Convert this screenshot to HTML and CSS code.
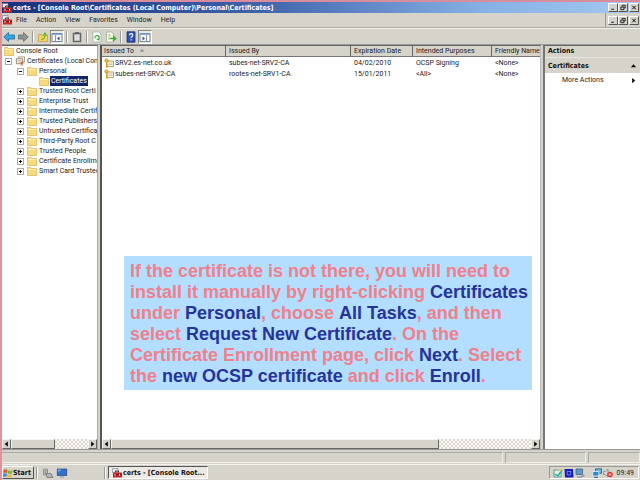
FILE: index.html
```html
<!DOCTYPE html>
<html lang="en">
<head>
    <meta charset="UTF-8">
    <meta name="viewport" content="width=device-width, initial-scale=1.0">
    <title>certs - [Console Root]</title>
    <link rel="stylesheet" href="styles.css">
</head>
<body>
    <!-- shared icons -->
    <svg class="defs" width="0" height="0">
        <symbol id="folder" viewBox="0 0 10 10">
            <path d="M.5 1.500h3l1 1h5v7h-9z" fill="#f6da7c" stroke="#d9b352" stroke-width=".7"/>
            <path d="M1 3.500h8" stroke="#fff3b8"/>
        </symbol>
        <symbol id="toolbox" viewBox="0 0 10 10">
            <path d="M.5.5h5.500v4H.5z" fill="#e8e8ee" stroke="#777b88" stroke-width=".6"/>
            <path d="M3.500 4.500V3h3v1.500" fill="none" stroke="#5b2424"/>
            <rect x="1" y="4.500" width="9" height="5" fill="#c7282c"/>
            <path d="M1 6.500h9" stroke="#751315"/>
            <path d="M3 6v1.500M7.500 6v1.500" stroke="#fff"/>
        </symbol>
        <symbol id="cert" viewBox="0 0 10 10">
            <path d="M3 3h6.500v5.500H3z" fill="#fdf8df" stroke="#a08c55" stroke-width=".8"/>
            <path d="M4.500 5h4M4.500 6.500h4" stroke="#9aa0b8" stroke-width=".6"/>
            <circle cx="2.500" cy="2.500" r="1.700" fill="#f4c33c" stroke="#a87514" stroke-width=".6"/>
            <path d="M2.500 4v5.500M2.500 7h1.300M2.500 9h1.300" stroke="#d99a1c"/>
        </symbol>
        <symbol id="certs" viewBox="0 0 11 10">
            <path d="M3.500.5h7v5.500h-7z" fill="#fff" stroke="#8c7b55" stroke-width=".8"/>
            <path d="M1.500 2.500h7V8h-7z" fill="#fdf8df" stroke="#6c6450" stroke-width=".8"/>
            <path d="M3 4.500h4M3 6h3" stroke="#7d88b0" stroke-width=".6"/>
            <circle cx="7.500" cy="7" r="1.500" fill="#e2662a"/>
            <path d="M7 8l-.5 2M8 8l.5 2" stroke="#c04a20" stroke-width=".7"/>
        </symbol>
        <symbol id="min" viewBox="0 0 8 8"><path d="M2 6h3" stroke="#000"/></symbol>
        <symbol id="restore" viewBox="0 0 8 8"><path d="M3 3V1.500h3.500v3H5M1.500 3.500h3.500v3H1.500z" fill="none" stroke="#000" stroke-width=".9"/></symbol>
        <symbol id="close" viewBox="0 0 8 8"><path d="M2 2l4 4M6 2L2 6" stroke="#000" stroke-width="1.100"/></symbol>
        <symbol id="left" viewBox="0 0 8 8"><path d="M5.500 1v6L2 4z"/></symbol>
        <symbol id="right" viewBox="0 0 8 8"><path d="M2.500 1v6L6 4z"/></symbol>
        <symbol id="up" viewBox="0 0 8 8"><path d="M1 6h6L4 2.500z"/></symbol>
        <symbol id="pane" viewBox="0 0 12 12">
            <path d="M1 2.500h10v8H1z" fill="#f7f7f5" stroke="#7c8798"/>
            <path d="M1 3h10" stroke="#6e93c4" stroke-width="1.500"/>
            <path d="M4.500 4v6.500" stroke="#8a94a4"/>
            <path d="M8.500 5.500v4L6 7.500z" fill="#35558c"/>
        </symbol>
    </svg>

    <header class="title-bar">
        <svg class="icon"><use href="#toolbox"/></svg>
        <h1>certs - [Console Root\Certificates (Local Computer)\Personal\Certificates]</h1>
        <div class="window-buttons">
            <button aria-label="Minimize"><svg><use href="#min"/></svg></button>
            <button aria-label="Restore"><svg><use href="#restore"/></svg></button>
            <button aria-label="Close" class="apart"><svg><use href="#close"/></svg></button>
        </div>
    </header>

    <nav class="menu-bar">
        <svg class="icon"><use href="#toolbox"/></svg>
        <button>File</button>
        <button>Action</button>
        <button>View</button>
        <button>Favorites</button>
        <button>Window</button>
        <button>Help</button>
        <div class="window-buttons child">
            <button aria-label="Minimize window"><svg><use href="#min"/></svg></button>
            <button aria-label="Restore window"><svg><use href="#restore"/></svg></button>
            <button aria-label="Close window" class="apart"><svg><use href="#close"/></svg></button>
        </div>
    </nav>

    <div class="toolbar">
        <button aria-label="Back"><svg viewBox="0 0 12 12"><path d="M.8 6L5.500 1.500V4h6v4h-6v2.500z" fill="#35a5e4" stroke="#1c6c9e" stroke-width=".8"/></svg></button>
        <button aria-label="Forward"><svg viewBox="0 0 12 12"><path d="M11.200 6L6.500 1.500V4h-5v4h5v2.500z" fill="#8f9090" stroke="#68696a" stroke-width=".8"/></svg></button>
        <span class="divider"></span>
        <button aria-label="Up one level"><svg viewBox="0 0 12 12"><path d="M1.500 3.500h3l1 1h5v6h-9z" fill="#f5d567" stroke="#c29a36" stroke-width=".7"/><path d="M4 8.500c3 0 4-2 4-5M6 4.500l2-2.500 2 2.500" fill="none" stroke="#6db52c" stroke-width="1.200"/></svg></button>
        <button aria-label="Show console tree" class="pressed"><svg><use href="#pane"/></svg></button>
        <span class="divider"></span>
        <button aria-label="Copy"><svg viewBox="0 0 12 12"><path d="M2.500 2.500h7v8h-7z" fill="#ddd" stroke="#666" stroke-width="1.500"/><path d="M4 2h4" stroke="#555" stroke-width="1.500"/></svg></button>
        <span class="divider"></span>
        <button aria-label="Refresh"><svg viewBox="0 0 12 12"><path d="M2 1h6l2 2v8H2z" fill="#fff" stroke="#98a898" stroke-width=".7"/><path d="M4 7.500a2.200 2.200 0 1 1 3.500 1M8.500 6.500l-.8 2.500-2-1" fill="none" stroke="#35a735" stroke-width="1.200"/></svg></button>
        <button aria-label="Export list"><svg viewBox="0 0 12 12"><path d="M1.500 1h5l2 2v8h-7z" fill="#fdfbe2" stroke="#98a898" stroke-width=".7"/><path d="M3 4h3M3 6h2M3 8h2" stroke="#9a9a80" stroke-width=".7"/><path d="M5 7.500h5M8 5l2.700 2.500L8 10" fill="none" stroke="#35a735" stroke-width="1.300"/></svg></button>
        <span class="divider"></span>
        <button aria-label="Help topics"><svg viewBox="0 0 12 12"><path d="M2 .8h8v10.400H2z" fill="#2c50b4" stroke="#1b2e77" stroke-width=".8"/><path d="M4.500 4.300c0-2.400 3.300-2.200 3.300-.2 0 1.400-1.700 1.300-1.700 3M6.100 8.300v1.200" fill="none" stroke="#fff" stroke-width="1.200"/></svg></button>
        <button aria-label="Show action pane" class="pressed"><svg class="flip"><use href="#pane"/></svg></button>
    </div>

    <main class="workspace">
        <section class="pane tree-pane">
            <ul class="tree">
                <li class="level-0"><svg class="icon"><use href="#folder"/></svg><span>Console Root</span></li>
                <li class="level-1"><button class="expander open" aria-label="Collapse"></button><svg class="icon"><use href="#certs"/></svg><span>Certificates (Local Com</span></li>
                <li class="level-2"><button class="expander open" aria-label="Collapse"></button><svg class="icon"><use href="#folder"/></svg><span>Personal</span></li>
                <li class="level-3"><svg class="icon"><use href="#folder"/></svg><span class="selected">Certificates</span></li>
                <li class="level-2"><button class="expander" aria-label="Expand"></button><svg class="icon"><use href="#folder"/></svg><span>Trusted Root Certi</span></li>
                <li class="level-2"><button class="expander" aria-label="Expand"></button><svg class="icon"><use href="#folder"/></svg><span>Enterprise Trust</span></li>
                <li class="level-2"><button class="expander" aria-label="Expand"></button><svg class="icon"><use href="#folder"/></svg><span>Intermediate Certif</span></li>
                <li class="level-2"><button class="expander" aria-label="Expand"></button><svg class="icon"><use href="#folder"/></svg><span>Trusted Publishers</span></li>
                <li class="level-2"><button class="expander" aria-label="Expand"></button><svg class="icon"><use href="#folder"/></svg><span>Untrusted Certifica</span></li>
                <li class="level-2"><button class="expander" aria-label="Expand"></button><svg class="icon"><use href="#folder"/></svg><span>Third-Party Root C</span></li>
                <li class="level-2"><button class="expander" aria-label="Expand"></button><svg class="icon"><use href="#folder"/></svg><span>Trusted People</span></li>
                <li class="level-2"><button class="expander" aria-label="Expand"></button><svg class="icon"><use href="#folder"/></svg><span>Certificate Enrollme</span></li>
                <li class="level-2"><button class="expander" aria-label="Expand"></button><svg class="icon"><use href="#folder"/></svg><span>Smart Card Trusted</span></li>
            </ul>
            <div class="scrollbar">
                <button aria-label="Scroll left"><svg><use href="#left"/></svg></button>
                <div class="track"><div class="thumb tree-thumb"></div></div>
                <button aria-label="Scroll right"><svg><use href="#right"/></svg></button>
            </div>
        </section>

        <section class="pane list-pane">
            <table class="list">
                <colgroup>
                    <col class="col-to"><col class="col-by"><col class="col-date"><col class="col-purpose"><col>
                </colgroup>
                <thead>
                    <tr>
                        <th>Issued To <svg class="sort"><use href="#up"/></svg></th>
                        <th>Issued By</th>
                        <th>Expiration Date</th>
                        <th>Intended Purposes</th>
                        <th>Friendly Name</th>
                    </tr>
                </thead>
                <tbody>
                    <tr>
                        <td><div class="name"><svg class="icon"><use href="#cert"/></svg>SRV2.es-net.co.uk</div></td>
                        <td>subes-net-SRV2-CA</td>
                        <td>04/02/2010</td>
                        <td>OCSP Signing</td>
                        <td>&lt;None&gt;</td>
                    </tr>
                    <tr>
                        <td><div class="name"><svg class="icon"><use href="#cert"/></svg>subes-net-SRV2-CA</div></td>
                        <td>rootes-net-SRV1-CA</td>
                        <td>15/01/2011</td>
                        <td>&lt;All&gt;</td>
                        <td>&lt;None&gt;</td>
                    </tr>
                </tbody>
            </table>
            <div class="scrollbar">
                <button aria-label="Scroll left"><svg><use href="#left"/></svg></button>
                <div class="track"><div class="thumb list-thumb"></div></div>
                <button aria-label="Scroll right"><svg><use href="#right"/></svg></button>
            </div>
        </section>

        <aside class="pane actions-pane">
            <h2>Actions</h2>
            <h3>Certificates <svg><use href="#up"/></svg></h3>
            <button class="more">More Actions <svg><use href="#right"/></svg></button>
        </aside>
    </main>

    <div class="status-bar"><span></span><span></span><span></span></div>

    <footer class="taskbar">
        <button class="start"><svg viewBox="0 0 10 10"><path d="M.5 2q2-1.500 4 0L4 5Q2 4 0 5z" fill="#e35b2c"/><path d="M5 2.200q2 1.200 4.500 0L9 5.200q-2 1-4.500 0z" fill="#77b93c"/><path d="M0 5.800q2-1 4 0l-.5 3Q2 8-.5 9z" fill="#3f8fd8"/><path d="M4.500 6q2 1.200 4.400 0l-.6 3q-2 1-4.300 0z" fill="#f4c02c"/></svg>Start</button>
        <span class="divider"></span>
        <button class="launch" aria-label="Server Manager"><svg viewBox="0 0 11 10"><path d="M1 1h4v6H1z" fill="#ccd0d4" stroke="#70757b" stroke-width=".7"/><path d="M2 3h2M2 5h2" stroke="#666"/><path d="M3.500 5.500h5l2 4h-6z" fill="#aeb3b8" stroke="#666b70" stroke-width=".7"/></svg></button>
        <button class="launch" aria-label="Show desktop"><svg viewBox="0 0 11 10"><path d="M.8 1h9.400v6.500H.8z" fill="#2f6fce" stroke="#28487e" stroke-width=".7"/><path d="M1.500 4l4-2.500h-4z" fill="#6fb2ef"/><path d="M3.500 9h4" stroke="#8d949c"/></svg></button>
        <span class="divider push"></span>
        <button class="task"><svg class="icon"><use href="#toolbox"/></svg>certs - [Console Root...</button>
        <div class="tray">
            <svg viewBox="0 0 10 10"><path d="M1 2h7v7H1z" fill="#dff2e4" stroke="#4a8e86" stroke-width=".8"/><path d="M2 6l3 2 4-6" fill="none" stroke="#25a7a4" stroke-width="1.500"/><circle cx="7" cy="2" r="1.500" fill="#e9d24c"/></svg>
            <svg viewBox="0 0 10 10"><path d="M.5 1H9l.5 8.500H1z" fill="#1420b4"/><path d="M3 3.500h4L6 7H3.500z" fill="none" stroke="#8390ff" stroke-width=".8"/></svg>
            <svg viewBox="0 0 10 10"><path d="M1 1h6.500v5.500H1z" fill="#5c9ad0" stroke="#48617c" stroke-width=".8"/><path d="M2 9h5" stroke="#77808c"/><circle cx="8" cy="7.500" r="1.600" fill="#9696b4"/></svg>
            <svg viewBox="0 0 10 10" class="gap"><path d="M3.500.8h6v4.500h-6z" fill="#6db7e6" stroke="#23557f" stroke-width=".8"/><path d="M.8 3.500h6V8h-6z" fill="#2f86c4" stroke="#e8f4ff" stroke-width=".8"/><path d="M2 9.300h4" stroke="#23557f"/></svg>
            <svg viewBox="0 0 10 10"><path d="M.5 3.500h2L5 1v8L2.500 6.500h-2z" fill="#d8dadd" stroke="#777" stroke-width=".7"/><circle cx="7" cy="6.500" r="2.800" fill="#dc3b36"/><path d="M6 5.500l2 2M8 5.500l-2 2" stroke="#fff" stroke-width=".9"/></svg>
            <time>09:49</time>
        </div>
    </footer>

    <div class="callout">
        If the certificate is not there, you will need to install it manually by right-clicking <b>Certificates</b> under <b>Personal</b>, choose <b>All Tasks</b>, and then select <b>Request New Certificate</b>. On the Certificate Enrollment page, click <b>Next</b>. Select the <b>new OCSP certificate</b> and click <b>Enroll</b>.
    </div>
</body>
</html>
```

FILE: styles.css
```css
* {
    box-sizing: border-box;
}

body {
    margin: 0;
    height: 100vh;
    display: flex;
    flex-direction: column;
    border-top: 2px solid #d88c9c;
    border-left: 2px solid #e2929a;
    background-color: #d6d3cb;
    color: #222;
    font-family: Roboto, "Noto Sans", sans-serif;
    font-size: 7px;
    line-height: 10px;
    overflow: hidden;
}

.defs {
    position: absolute;
}

svg {
    display: block;
    flex: none;
}

h1, h2, h3 {
    margin: 0;
    font-size: 7px;
    font-weight: bold;
}

button {
    margin: 0;
    padding: 0;
    border: none;
    background: none;
    color: inherit;
    font: inherit;
}

h1, h2, h3, .start, .task {
    font-family: "DejaVu Sans Condensed", "DejaVu Sans", sans-serif;
}

.icon {
    width: 10px;
    height: 10px;
}

/* title and menu */
.title-bar {
    display: flex;
    align-items: center;
    gap: 1px;
    height: 11px;
    flex: none;
    background: linear-gradient(to right, #17307c, #3f62aa 40%, #86b0e4 75%, #a4c8f0);
    color: #fff;
}

.title-bar h1 {
    flex: 1;
    white-space: nowrap;
}

.window-buttons {
    display: flex;
    align-items: center;
    padding-right: 1px;
}

.window-buttons button {
    width: 10px;
    height: 9px;
    background-color: #d6d3cb;
    border: 1px solid;
    border-color: #fff #555 #555 #fff;
}

.window-buttons svg {
    width: 8px;
    height: 7px;
}

.window-buttons .apart {
    margin-left: 1px;
}

.menu-bar {
    display: flex;
    align-items: center;
    height: 15px;
    flex: none;
    border-bottom: 1px solid #aaa79f;
}

.menu-bar > button {
    padding: 0 5px 0 4px;
}

.window-buttons.child {
    margin-left: auto;
    height: 14px;
    padding-left: 2px;
    border-left: 1px solid #999;
}

.toolbar {
    display: flex;
    align-items: center;
    height: 17px;
    flex: none;
    border-top: 1px solid #f2f1ed;
    border-bottom: 1px solid #999;
}

.toolbar button {
    padding: 1px;
}

.toolbar svg {
    width: 12px;
    height: 12px;
}

.toolbar .pressed {
    padding: 0;
    background-color: #ebe9e4;
    border: 1px solid;
    border-color: #8c8a84 #fff #fff #8c8a84;
}

.toolbar .flip {
    transform: scaleX(-1);
}

.divider {
    width: 2px;
    height: 12px;
    margin: 0 2px;
    border-left: 1px solid #999;
    border-right: 1px solid #fff;
}

/* panes */
.workspace {
    flex: 1;
    min-height: 0;
    display: flex;
    gap: 2px;
}

.pane {
    display: flex;
    flex-direction: column;
    min-width: 0;
    background-color: #fff;
    border-top: 1px solid #666;
}

.tree-pane {
    flex: 0 0 96px;
    border-right: 1px solid #aaa;
}

.list-pane {
    flex: 1;
    border-left: 2px solid #555;
    border-right: 1px solid #bbb;
}

.actions-pane {
    flex: 0 0 97px;
    border-left: 2px solid #777;
}

.tree {
    flex: 1;
    margin: 0;
    padding: 0;
    list-style: none;
    overflow: hidden;
}

.tree li {
    display: flex;
    align-items: center;
    gap: 1px;
    height: 10px;
    white-space: nowrap;
}

.tree .icon {
    margin-right: 1px;
}

.tree .selected {
    padding: 0 1px;
    margin-left: -1px;
    background-color: #12276b;
    color: #fff;
}

.level-0 {
    padding-left: 2px;
}

.level-1 {
    padding-left: 4px;
}

.level-2 {
    padding-left: 16px;
}

.level-3 {
    padding-left: 37px;
}

.expander {
    flex: none;
    width: 5px;
    height: 5px;
    margin-right: 3px;
    outline: 1px solid #aaa;
    background: linear-gradient(#111, #111) center / 3px 1px no-repeat, linear-gradient(#111, #111) center / 1px 3px no-repeat;
}

.expander.open {
    background: linear-gradient(#111, #111) center / 3px 1px no-repeat;
}

.list {
    width: 100%;
    table-layout: fixed;
    border-collapse: separate;
    border-spacing: 0;
    margin-bottom: auto;
}

.col-to {
    width: 124px;
}

.col-by {
    width: 125px;
}

.col-date {
    width: 62px;
}

.col-purpose {
    width: 79px;
}

.list th, .list td {
    height: 11px;
    padding: 0 0 0 3px;
    text-align: left;
    font-weight: normal;
    white-space: nowrap;
}

.list th {
    background-color: #d6d3cb;
    border-right: 1px solid #666;
    border-bottom: 1px solid #777;
}

.list th:first-child, .list td:first-child {
    padding-left: 2px;
}

.list th:last-child {
    border-right: none;
}

.sort {
    display: inline-block;
    width: 6px;
    height: 6px;
    margin-left: 3px;
    fill: #888;
}

.name {
    display: flex;
    align-items: center;
    gap: 1px;
}

.scrollbar {
    display: flex;
    height: 10px;
    flex: none;
}

.scrollbar button, .thumb {
    height: 10px;
    background-color: #d6d3cb;
    border: 1px solid;
    border-color: #f4f3f0 #666 #666 #f4f3f0;
}

.scrollbar button {
    width: 9px;
}

.scrollbar svg {
    width: 7px;
    height: 8px;
}

.track {
    flex: 1;
    background: repeating-conic-gradient(#dedbd5 0 25%, #f6f5f2 0 50%) 0 0 / 4px 4px;
}

.tree-thumb {
    width: 57%;
}

.list-thumb {
    width: 78%;
}

.actions-pane h2, .actions-pane h3 {
    padding-left: 3px;
    height: 11px;
    background-color: #d6d3cb;
    color: #111;
}

.actions-pane h3 {
    display: flex;
    justify-content: space-between;
    align-items: center;
    height: 16px;
    border-top: 1px solid #e8e6e0;
}

.actions-pane svg {
    width: 7px;
    height: 7px;
    margin-right: 3px;
}

.more {
    display: flex;
    justify-content: space-between;
    align-items: center;
    padding: 2px 0 2px 17px;
}

/* status bar and taskbar */
.status-bar {
    display: flex;
    gap: 2px;
    height: 15px;
    flex: none;
    padding: 2px 0 1px;
    border-top: 1px solid #999;
}

.status-bar span {
    flex: 0 0 81px;
    border: 1px solid;
    border-color: #aaa #f0eeea #f0eeea #aaa;
}

.status-bar span:first-child {
    flex: 1;
    border-left: none;
}

.status-bar span:last-child {
    flex: 0 0 52px;
}

.taskbar {
    display: flex;
    align-items: center;
    height: 16px;
    flex: none;
    border-top: 1px solid #f2f1ed;
}

.start, .task {
    display: flex;
    align-items: center;
    height: 13px;
    font-weight: bold;
    color: #111;
    white-space: nowrap;
    border: 1px solid;
}

.start {
    width: 32px;
    border-color: #fff #555 #555 #fff;
}

.start svg {
    width: 10px;
    height: 10px;
}

.launch {
    margin-left: 2px;
}

.launch svg {
    width: 12px;
    height: 10px;
}

.taskbar .push {
    margin-left: 36px;
}

.task {
    gap: 1px;
    width: 100px;
    padding-left: 3px;
    background-color: #ebe9e4;
    border-color: #555 #fff #fff #555;
}

.tray {
    display: flex;
    align-items: center;
    gap: 1px;
    height: 13px;
    margin-left: auto;
    margin-right: 1px;
    padding: 0 4px 0 3px;
    border: 1px solid;
    border-color: #999 #fff #fff #999;
}

.tray svg {
    width: 10px;
    height: 10px;
}

.tray .gap {
    margin-left: 6px;
}

.tray time {
    margin-left: 3px;
}

/* instruction note lying over the console */
.callout {
    position: absolute;
    left: 124px;
    top: 256px;
    width: 408px;
    padding: 5px 2px 3px 6px;
    background-color: #b3deff;
    color: #f0808a;
    font-family: "Liberation Sans", Arial, sans-serif;
    font-size: 18px;
    font-weight: bold;
    line-height: 21px;
}

.callout b {
    color: #26339a;
}
```
